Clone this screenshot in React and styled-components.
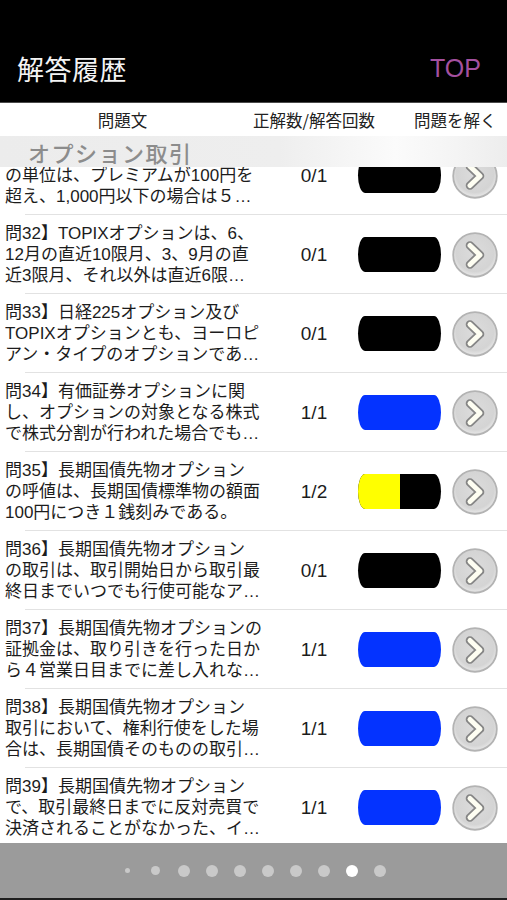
import React from "react";
import styled, { createGlobalStyle } from "styled-components";

const GlobalStyle = createGlobalStyle`
  html, body { margin: 0; padding: 0; background: #fff; }
  body { font-family: "Liberation Sans", "Noto Sans CJK JP", sans-serif; }
  * { box-sizing: border-box; }
`;

const Screen = styled.div`
  width: 507px;
  height: 900px;
  display: flex;
  flex-direction: column;
  overflow: hidden;
  background: #fff;
`;

const NavBar = styled.header`
  height: 103px;
  flex: none;
  background: #000;
  border-bottom: 1px solid #4a4a4a;
  display: flex;
  align-items: center;
  justify-content: space-between;
  padding: 34px 26px 0 17px;
`;

const Title = styled.h1`
  margin: 0;
  font-family: "Noto Sans CJK JP", sans-serif;
  font-weight: 400;
  font-size: 27px;
  letter-spacing: 0.5px;
  color: #f4f4f4;
`;

const TopLink = styled.span`
  font-family: "Liberation Sans", sans-serif;
  font-size: 25px;
  color: #a4509f;
`;

const ColumnHeader = styled.div`
  height: 33px;
  flex: none;
  display: grid;
  grid-template-columns: 245px 169px 1fr;
  align-items: center;
  font-family: "Noto Sans CJK JP", sans-serif;
  font-size: 16.5px;
  color: #222;
`;

const HeadCell = styled.div`
  text-align: ${(p) => p.$align || "left"};
  padding-left: ${(p) => p.$pad || 0}px;
  white-space: nowrap;
`;

const SectionHeader = styled.div`
  height: 31px;
  flex: none;
  display: flex;
  align-items: center;
  padding-left: 28px;
  background: linear-gradient(to right, #ececec 0%, #eeeeee 55%, #fbfbfb 78%, #f4f4f4 90%, #ededed 100%);
  font-family: "Noto Sans CJK JP", sans-serif;
  font-weight: 500;
  font-size: 22px;
  letter-spacing: 1.5px;
  color: #8c8c8c;
`;

const ListViewport = styled.div`
  flex: 1;
  overflow: hidden;
`;

const List = styled.div`
  margin-top: -31px;
`;

const Row = styled.div`
  height: 79px;
  display: flex;
  align-items: center;
  position: relative;
  &::after {
    content: "";
    position: absolute;
    left: 25px;
    right: 0;
    bottom: 0;
    height: 1px;
    background: #e2e2e2;
  }
`;

const Question = styled.div`
  width: 284px;
  padding-left: 5px;
  font-size: 17px;
  line-height: 21px;
  color: #1c1c1c;
`;

const Line = styled.div`
  white-space: nowrap;
  overflow: hidden;
`;

const Score = styled.div`
  width: 60px;
  text-align: center;
  font-family: "Liberation Sans", sans-serif;
  font-size: 19px;
  color: #1c1c1c;
`;

const Bar = styled.div`
  margin-left: 14px;
  width: 83px;
  height: 35px;
  border-radius: 7px / 50%;
  background: #000;
  overflow: hidden;
  display: flex;
`;

const Fill = styled.div`
  height: 100%;
  background: ${(p) => p.$color};
`;

const GoButton = styled.button`
  margin-left: 11px;
  width: 46px;
  height: 46px;
  padding: 0;
  border: none;
  background: none;
  display: block;
`;

const Footer = styled.footer`
  height: 57px;
  flex: none;
  background: #9b9b9b;
  border-bottom: 2px solid #1e1e1e;
  display: flex;
  align-items: center;
  justify-content: center;
`;

const DotSlot = styled.div`
  width: 28px;
  display: flex;
  justify-content: center;
  align-items: center;
`;

const Dot = styled.span`
  width: ${(p) => p.$size}px;
  height: ${(p) => p.$size}px;
  border-radius: 50%;
  background: ${(p) => (p.$active ? "#ffffff" : "#c9c9c9")};
`;

const Chevron = () => (
  <svg width="46" height="46" viewBox="0 0 46 46">
    <defs>
      <radialGradient id="cg" cx="50%" cy="45%" r="55%">
        <stop offset="0%" stopColor="#dcdcdc" />
        <stop offset="78%" stopColor="#d4d4d4" />
        <stop offset="92%" stopColor="#e2e2e2" />
        <stop offset="100%" stopColor="#c2c2c2" />
      </radialGradient>
    </defs>
    <circle cx="23" cy="23" r="21.8" fill="url(#cg)" stroke="#b3b3b3" strokeWidth="1.8" />
    <path d="M18 13.5 L28 23 L18 32.5" fill="none" stroke="#777" strokeWidth="8.6" strokeLinecap="round" strokeLinejoin="round" opacity="0.85" />
    <path d="M18 13.5 L28 23 L18 32.5" fill="none" stroke="#fefef2" strokeWidth="5" strokeLinecap="round" strokeLinejoin="round" />
  </svg>
);

const rows = [
  { lines: ["問31】日経225オプションの呼値", "の単位は、プレミアムが100円を", "超え、1,000円以下の場合は５…"], c: 0, n: 1 },
  { lines: ["問32】TOPIXオプションは、6、", "12月の直近10限月、3、9月の直", "近3限月、それ以外は直近6限…"], c: 0, n: 1 },
  { lines: ["問33】日経225オプション及び", "TOPIXオプションとも、ヨーロピ", "アン・タイプのオプションであ…"], c: 0, n: 1 },
  { lines: ["問34】有価証券オプションに関", "し、オプションの対象となる株式", "で株式分割が行われた場合でも…"], c: 1, n: 1 },
  { lines: ["問35】長期国債先物オプション", "の呼値は、長期国債標準物の額面", "100円につき１銭刻みである。"], c: 1, n: 2 },
  { lines: ["問36】長期国債先物オプション", "の取引は、取引開始日から取引最", "終日までいつでも行使可能なア…"], c: 0, n: 1 },
  { lines: ["問37】長期国債先物オプションの", "証拠金は、取り引きを行った日か", "ら４営業日目までに差し入れな…"], c: 1, n: 1 },
  { lines: ["問38】長期国債先物オプション", "取引において、権利行使をした場", "合は、長期国債そのものの取引…"], c: 1, n: 1 },
  { lines: ["問39】長期国債先物オプション", "で、取引最終日までに反対売買で", "決済されることがなかった、イ…"], c: 1, n: 1 },
];

const dots = [5, 9, 12, 12, 12, 12, 12, 12, 12, 12];

export default function App() {
  return (
    <>
      <GlobalStyle />
      <Screen>
        <NavBar>
          <Title>解答履歴</Title>
          <TopLink>TOP</TopLink>
        </NavBar>
        <ColumnHeader>
          <HeadCell $align="center">問題文</HeadCell>
          <HeadCell $pad={8}>正解数/解答回数</HeadCell>
          <HeadCell>問題を解く</HeadCell>
        </ColumnHeader>
        <SectionHeader>オプション取引</SectionHeader>
        <ListViewport>
          <List>
            {rows.map((r, i) => {
              const ratio = r.c / r.n;
              const color = ratio >= 1 ? "#0433ff" : "#ffff00";
              return (
                <Row key={i}>
                  <Question>
                    {r.lines.map((l, j) => (
                      <Line key={j}>{l}</Line>
                    ))}
                  </Question>
                  <Score>
                    {r.c}/{r.n}
                  </Score>
                  <Bar>
                    {ratio > 0 && <Fill $color={color} style={{ width: `${ratio * 100}%` }} />}
                  </Bar>
                  <GoButton aria-label="問題を解く">
                    <Chevron />
                  </GoButton>
                </Row>
              );
            })}
          </List>
        </ListViewport>
        <Footer>
          {dots.map((s, i) => (
            <DotSlot key={i}>
              <Dot $size={s} $active={i === 8} />
            </DotSlot>
          ))}
        </Footer>
      </Screen>
    </>
  );
}
